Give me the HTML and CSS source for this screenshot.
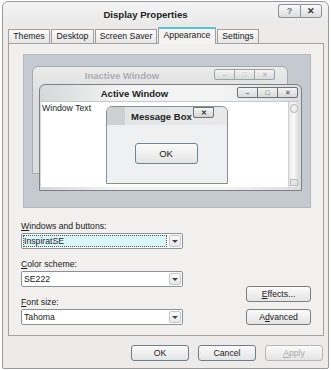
FILE: index.html
```html
<!DOCTYPE html>
<html>
<head>
<meta charset="utf-8">
<link rel="stylesheet" href="styles.css">
</head>
<body>
<div class="window">
  <div class="titlebar">
    <span class="title">Display Properties</span>
    <div class="tbtns">
      <span class="tbtn">?</span>
      <span class="tbtn close">&#x2715;</span>
    </div>
  </div>
  <div class="tabs">
    <span class="tab t1">Themes</span>
    <span class="tab t2">Desktop</span>
    <span class="tab t3">Screen Saver</span>
    <span class="tab t4 active">Appearance</span>
    <span class="tab t5">Settings</span>
  </div>
  <div class="panel">
    <div class="preview">
      <div class="win inactive">
        <div class="wtitle">Inactive Window</div>
        <div class="wbtns"><span class="wb">&#x2013;</span><span class="wb">&#x25A1;</span><span class="wb">&#x2715;</span></div>
      </div>
      <div class="win activewin">
        <div class="wtitle">Active Window</div>
        <div class="wbtns"><span class="wb">&#x2013;</span><span class="wb">&#x25A1;</span><span class="wb">&#x2715;</span></div>
        <div class="wbody">
          <span class="wtext">Window Text</span>
          <div class="scroll"><span class="thumb"></span><span class="sarrow"></span></div>
        </div>
      </div>
      <div class="win msg">
        <div class="mtitle">Message Box<span class="mclose">&#x2715;</span></div>
        <div class="mbody"><span class="btn okm">OK</span></div>
      </div>
    </div>
    <div class="form">
      <div class="fields">
        <label class="lbl"><u>W</u>indows and buttons:</label>
        <div class="combo sel"><span class="val">InspiratSE</span><span class="arrow"></span></div>
        <label class="lbl"><u>C</u>olor scheme:</label>
        <div class="combo"><span class="val">SE222</span><span class="arrow"></span></div>
        <label class="lbl"><u>F</u>ont size:</label>
        <div class="combo"><span class="val">Tahoma</span><span class="arrow"></span></div>
      </div>
      <div class="side">
        <span class="btn"><u>E</u>ffects...</span>
        <span class="btn">A<u>d</u>vanced</span>
      </div>
    </div>
  </div>
  <div class="footer">
    <span class="btn fb">OK</span>
    <span class="btn fb">Cancel</span>
    <span class="btn fb disabled"><u>A</u>pply</span>
  </div>
</div>
</body>
</html>
```
FILE: styles.css
```css
* { box-sizing: border-box; }
html, body { margin: 0; padding: 0; background: #ffffff; }
body {
  width: 331px; height: 370px; overflow: hidden;
  font-family: "Liberation Sans", Arial, sans-serif;
  font-size: 8.7px; color: #1a1a1a;
}
.window {
  margin: 1px 2px 0 2px;
  width: 327px; height: 368px;
  border: 1px solid #9a9a9a;
  border-radius: 6px 6px 2px 2px;
  background: #ecebe9;
  display: flex; flex-direction: column;
}
.titlebar {
  height: 24px;
  display: flex; align-items: center; justify-content: center;
  position: relative;
  background: linear-gradient(#f4f4f4, #e9e9e9);
  border-radius: 6px 6px 0 0;
}
.title { font-weight: bold; font-size: 9.6px; color: #222; margin-left: -40px; }
.tbtns { position: absolute; right: 6px; top: 2px; display: flex; }
.tbtn {
  width: 22px; height: 14px; border: 1px solid #8e9297;
  background: linear-gradient(#fafafa, #dcdcdc);
  display: flex; align-items: center; justify-content: center;
  font-size: 9px; color: #777; font-weight: bold;
}
.tbtn:first-child { border-radius: 3px 0 0 3px; border-right: none; }
.tbtn.close { border-radius: 0 3px 3px 0; color: #333; }
.tabs {
  display: flex; align-items: flex-end;
  margin-left: 5px; height: 17px;
}
.tab {
  height: 14px;
  border: 1px solid #a0a0a0; border-bottom: none;
  background: linear-gradient(#fbfbfb, #e6e6e6);
  font-size: 8.7px; line-height: 13px; text-align: center;
  margin-right: 1px;
}
.t1 { width: 42px; }
.t2 { width: 43px; }
.t3 { width: 62px; }
.t4 { width: 58px; }
.t5 { width: 42px; }
.tab.active {
  height: 17px; border-top: 2px solid #59c4d0;
  background: #f3f3f2; margin-bottom: -1px; position: relative; z-index: 1;
}
.panel {
  margin: 0 4px 0 5px;
  height: 293px;
  border: 1px solid #a3a3a3;
  background: #f1f0ef;
  display: flex; flex-direction: column;
  padding: 10px 12px 0 14px;
}
.preview {
  position: relative;
  width: 288px; height: 154px;
  background: #c5cad0;
  border: 1px solid #b5b9be;
  overflow: hidden;
}
.win { position: absolute; }
.inactive {
  left: 8px; top: 11px; width: 256px; height: 108px;
  border: 1px solid #a7abb0; border-radius: 6px 6px 0 0;
  background: linear-gradient(#ebebeb, #dcdde0 30px);
}
.inactive .wtitle {
  text-align: center; font-weight: bold; font-size: 9.5px; color: #a9adb2;
  margin-top: 3px; margin-right: 76px;
}
.wbtns { position: absolute; display: flex; }
.inactive .wbtns { right: 12px; top: 2px; }
.wb {
  width: 21px; height: 11px; border: 1px solid #9ea3a8;
  background: linear-gradient(#f4f4f4, #d9dadc);
  font-size: 7px; line-height: 9px; text-align: center; color: #b0b0b0;
  margin-left: -1px;
}
.wbtns .wb:first-child { border-radius: 2px 0 0 2px; }
.wbtns .wb:last-child { border-radius: 0 2px 2px 0; }
.activewin {
  left: 15px; top: 29px; width: 263px; height: 107px;
  border: 1px solid #7d8186; border-radius: 6px 6px 0 0;
  background: linear-gradient(90deg, #d6d7d9, #f3f3f3 30%, #f3f3f3 70%, #dcdcdc);
  padding: 0 3px 3px 1px;
  display: flex; flex-direction: column;
}
.activewin .wtitle {
  text-align: center; font-weight: bold; font-size: 9.5px; color: #222;
  height: 16px; line-height: 17px; margin-right: 70px;
}
.activewin .wbtns { right: 3px; top: 2px; }
.activewin .wb { color: #444; border-color: #6f7378; }
.wbody {
  flex: 1; background: #ffffff; border-top: 1px solid #c5c8cb;
  position: relative; padding: 1px 1px;
}
.wtext { font-size: 8.7px; }
.scroll {
  position: absolute; right: 0; top: 0; bottom: 0; width: 10px;
  background: linear-gradient(90deg, #e7e7e7, #fafafa, #e0e0e0);
  border-left: 1px solid #d0d0d0;
}
.thumb {
  position: absolute; left: 1px; top: 2px; width: 8px; height: 9px;
  border: 1px solid #b4b4b4; border-radius: 4px; background: #f0f0f0;
}
.sarrow {
  position: absolute; left: 1px; bottom: 1px; width: 8px; height: 7px;
  border: 1px solid #bcbcbc; background: #e6e6e6;
}
.msg {
  left: 82px; top: 51px; width: 122px; height: 78px;
  border: 1px solid #8a8e93; border-radius: 6px 6px 0 0;
  background: #eff0f1;
  display: flex; flex-direction: column;
}
.mtitle {
  height: 18px; position: relative;
  background: linear-gradient(90deg, #cfd0d2 0, #cfd0d2 18px, #e3e4e5 18px, #e9e9ea);
  font-weight: bold; font-size: 9.5px; line-height: 19px; padding-left: 24px; color: #222;
  border-radius: 6px 6px 0 0;
}
.mclose {
  position: absolute; right: 13px; top: 0; width: 21px; height: 11px;
  border: 1px solid #6f7378; border-radius: 0 0 2px 2px;
  background: linear-gradient(#f6f6f6, #d3d3d3);
  font-size: 7px; line-height: 9px; text-align: center; color: #333;
}
.mbody { flex: 1; display: flex; justify-content: center; padding-top: 18px; padding-right: 2px; }
.btn {
  display: flex; align-items: center; justify-content: center;
  border: 1px solid #6d7f8c; border-radius: 3px;
  background: linear-gradient(#fbfbfb, #e4e4e4);
  font-size: 8.7px; color: #222;
}
.okm { width: 63px; height: 21px; border-color: #6f8591; font-size: 9.5px; }
.form {
  display: flex; justify-content: space-between; align-items: flex-end;
  margin-top: 13px;
}
.fields { display: flex; flex-direction: column; width: 162px; margin-left: -2px; }
.lbl { font-size: 8.7px; height: 11px; line-height: 11px; margin-bottom: 1px; }
.combo {
  height: 16px; border: 1px solid #8a9199; border-radius: 2px;
  background: #fff; display: flex; align-items: center; padding: 0 1px 0 1px;
  margin-bottom: 10px; position: relative;
}
.combo:last-child { margin-bottom: 0; }
.combo .val { flex: 1; font-size: 8.7px; padding-left: 1px; }
.combo.sel .val {
  background: #d9f6f8; color: #222; outline: 1px dotted #555; outline-offset: -1px;
  margin-right: 2px; height: 12px; line-height: 12px;
}
.arrow {
  width: 12px; height: 12px; display: flex; align-items: center; justify-content: center;
  border: 1px solid #c4c7ca; border-radius: 2px;
  background: linear-gradient(#fafafa, #e6e7e8);
}
.arrow::after {
  content: ""; border-left: 3px solid transparent; border-right: 3px solid transparent;
  border-top: 3px solid #444;
}
.side { display: flex; flex-direction: column; gap: 7px; margin-right: 0; }
.side .btn { width: 65px; height: 16px; border-color: #7c7f82; }
.footer {
  display: flex; justify-content: flex-end; gap: 9px;
  padding: 9px 5px 0 0;
}
.fb { width: 58px; height: 16px; border-color: #6e7f8c; }
.fb.disabled { color: #a9a9a9; border-color: #b5b9bd; }
u { text-decoration: underline; }
```
